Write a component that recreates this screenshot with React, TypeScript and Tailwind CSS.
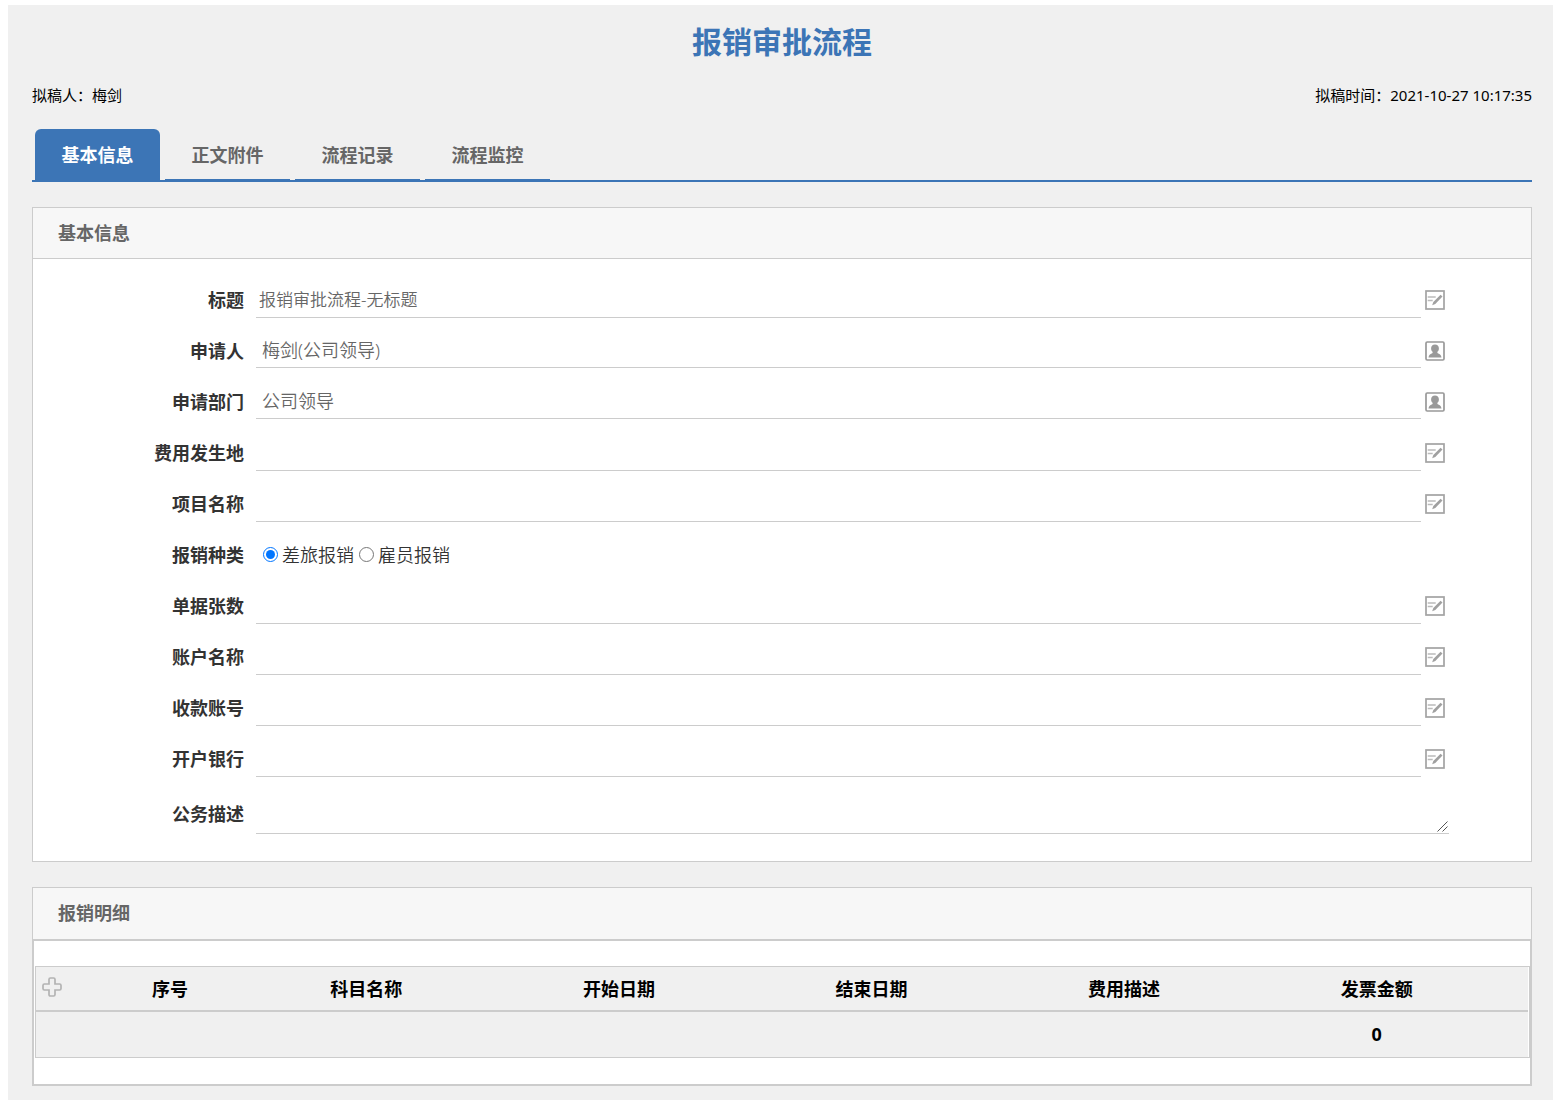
import { useState } from 'react';

type Field = {
  id: string;
  label: string;
  kind: 'text' | 'picker' | 'radio' | 'area';
  value?: string;
};

const tabs = ['基本信息', '正文附件', '流程记录', '流程监控'];

const fields: Field[] = [
  { id: 'title', label: '标题', kind: 'text', value: '报销审批流程-无标题' },
  { id: 'applicant', label: '申请人', kind: 'picker', value: '梅剑(公司领导)' },
  { id: 'department', label: '申请部门', kind: 'picker', value: '公司领导' },
  { id: 'place', label: '费用发生地', kind: 'text' },
  { id: 'project', label: '项目名称', kind: 'text' },
  { id: 'category', label: '报销种类', kind: 'radio' },
  { id: 'receipts', label: '单据张数', kind: 'text' },
  { id: 'accountName', label: '账户名称', kind: 'text' },
  { id: 'accountNo', label: '收款账号', kind: 'text' },
  { id: 'bank', label: '开户银行', kind: 'text' },
  { id: 'description', label: '公务描述', kind: 'area' },
];

const categories = ['差旅报销', '雇员报销'];

const columns = ['序号', '科目名称', '开始日期', '结束日期', '费用描述', '发票金额'];

function EditIcon() {
  return (
    <svg width="20" height="20" viewBox="0 0 20 20" fill="none">
      <rect x="1" y="1" width="18" height="18" stroke="#a3a3a3" strokeWidth="1.7" />
      <path d="M2.700 7h8M2.700 10.500h5" stroke="#bbb" strokeWidth="1.500" />
      <path d="M7.200 15.300l1.100-3.200 7.300-7.300 1.900 1.700-7.200 7.400z" fill="#a0a0a0" />
    </svg>
  );
}

function PersonIcon() {
  return (
    <svg width="20" height="20" viewBox="0 0 20 20" fill="none">
      <rect x="1" y="1" width="18" height="18" rx="1.2" stroke="#999" strokeWidth="1.7" />
      <path
        d="M10 3.600c-2.300 0-3.900 1.500-3.900 3.600 0 1.700.6 2.800 1.500 3.500v1.200c-1.900.8-3.900 1.800-4.100 4.500h13c-.2-2.700-2.200-3.700-4.100-4.500v-1.200c.9-.7 1.500-1.800 1.500-3.500 0-2.100-1.600-3.600-3.900-3.600z"
        fill="#999"
      />
    </svg>
  );
}

function PlusIcon() {
  return (
    <svg width="20" height="20" viewBox="0 0 20 20" fill="none">
      <path
        d="M8.400 1h3.200q1.400 0 1.400 1.400V7h4.600q1.400 0 1.400 1.400v3.200q0 1.400-1.400 1.400H13v4.600q0 1.400-1.400 1.400H8.400Q7 19 7 17.600V13H2.400Q1 13 1 11.600V8.400Q1 7 2.400 7H7V2.400Q7 1 8.400 1z"
        stroke="#b3b3b3"
        strokeWidth="1.7"
      />
    </svg>
  );
}

function FieldRow({ field }: { field: Field }) {
  const [value, setValue] = useState(field.value ?? '');
  const [category, setCategory] = useState(categories[0]);

  if (field.kind === 'radio') {
    return (
      <fieldset className="flex h-[51px] items-center text-lg">
        <legend className="float-left w-[211px] text-right font-bold text-[#333]">{field.label}</legend>
        <div className="ml-[19px] flex gap-[5px] text-[#333]">
          {categories.map((item) => (
            <label key={item} className="flex items-center gap-1 font-[350]">
              <input
                type="radio"
                name={field.id}
                className="size-[15px]"
                checked={category === item}
                onChange={() => setCategory(item)}
              />
              {item}
            </label>
          ))}
        </div>
      </fieldset>
    );
  }

  if (field.kind === 'area') {
    return (
      <div className="flex items-center pt-[9px] pb-[27px]">
        <label htmlFor={field.id} className="w-[211px] text-right text-lg font-bold text-[#333]">
          {field.label}
        </label>
        <div className="relative ml-3 flex flex-1">
          <textarea
            id={field.id}
            className="h-[41px] flex-1 resize-y border-b border-[#ccc] px-[3px] text-lg outline-none [&::-webkit-resizer]:bg-transparent"
            value={value}
            onChange={(e) => setValue(e.target.value)}
          />
          <svg
            className="pointer-events-none absolute right-px bottom-0.5"
            width="11"
            height="11"
            viewBox="0 0 11 11"
            stroke="#555"
          >
            <path d="M0.500 10.500L10.500 0.500M5.500 10.500L10.500 5.500" />
          </svg>
        </div>
      </div>
    );
  }

  const isPicker = field.kind === 'picker';

  return (
    <div className="flex h-[51px] items-center">
      <label htmlFor={field.id} className="w-[211px] text-right text-lg font-bold text-[#333]">
        {field.label}
      </label>
      <div className="ml-3 flex flex-1 items-center self-stretch pr-1">
        <div className="flex-1 self-stretch pt-2">
          <input
            id={field.id}
            type="text"
            readOnly={isPicker}
            className={`block w-full border-b border-[#ccc] pb-[3px] font-[350] text-[#666] outline-none ${
              isPicker ? 'h-[35px] px-1.5 text-lg' : 'h-9 px-[3px] text-[17px]'
            }`}
            value={value}
            onChange={(e) => setValue(e.target.value)}
          />
        </div>
        <button type="button" className="ml-1" aria-label={field.label}>
          {isPicker ? <PersonIcon /> : <EditIcon />}
        </button>
      </div>
    </div>
  );
}

export default function App() {
  const [activeTab, setActiveTab] = useState(tabs[0]);

  return (
    <div className='bg-white pt-[5px] pr-[5px] pl-2 font-["Noto_Sans","Noto_Sans_CJK_SC",sans-serif]'>
      <main className="bg-[#f0f0f0] pr-[21px] pb-3.5 pl-6">
        <h1 className="pt-[15px] text-center text-[30px] leading-[44px] font-bold text-[#3c75b6]">报销审批流程</h1>

        <div className="mt-[21px] flex justify-between text-[15px] leading-5 text-black">
          <span>拟稿人：梅剑</span>
          <span>拟稿时间：2021-10-27 10:17:35</span>
        </div>

        {/* Tabs */}
        <nav className="mt-6 flex gap-[5px] border-b-2 border-[#3c75b6] pl-[3px]">
          {tabs.map((tab) => (
            <button
              key={tab}
              type="button"
              onClick={() => setActiveTab(tab)}
              className={`h-[51px] w-[125px] rounded-t-md border-b border-[#3c75b6] pt-0.5 text-lg font-bold ${
                tab === activeTab ? 'bg-[#3c75b6] text-white' : 'text-[#666]'
              }`}
            >
              {tab}
            </button>
          ))}
        </nav>

        {/* Basic info */}
        <section className="mt-[25px] border border-[#ccc] bg-white">
          <h2 className="border-b border-[#ccc] bg-[#f7f7f7] pl-[25px] text-lg leading-[50px] font-bold text-[#666]">
            基本信息
          </h2>
          <form className="pt-[15px] pr-[82px]" onSubmit={(e) => e.preventDefault()}>
            {fields.map((field) => (
              <FieldRow key={field.id} field={field} />
            ))}
          </form>
        </section>

        {/* Expense details */}
        <section className="mt-[25px]">
          <h2 className="border-x border-t border-[#ccc] bg-[#f7f7f7] pl-[25px] text-lg leading-[51px] font-bold text-[#666]">
            报销明细
          </h2>
          <div className="border-2 border-[#ccc] bg-white pt-[25px] pb-[26px] pl-px">
            <div className="border border-[#ccc] pr-px">
              <table className="w-full table-fixed border-separate border-spacing-0 bg-[#f0f0f0] text-lg text-black">
                <colgroup>
                  <col className="w-16" />
                  <col className="w-[140px]" />
                  <col />
                  <col />
                  <col />
                  <col />
                  <col />
                  <col className="w-[25px]" />
                </colgroup>
                <thead>
                  <tr className="h-[45px]">
                    <th className="border-b-2 border-[#ccc] pb-[3px] pl-1.5 text-left">
                      <button type="button" className="block" aria-label="添加">
                        <PlusIcon />
                      </button>
                    </th>
                    {columns.map((name) => (
                      <th key={name} className="border-b-2 border-[#ccc]">
                        {name}
                      </th>
                    ))}
                    <th className="border-b-2 border-[#ccc]" />
                  </tr>
                </thead>
                <tbody>
                  <tr className="h-[45px]">
                    <td colSpan={6} />
                    <td className="pb-0.5 text-center font-bold">0</td>
                    <td />
                  </tr>
                </tbody>
              </table>
            </div>
          </div>
        </section>
      </main>
    </div>
  );
}
